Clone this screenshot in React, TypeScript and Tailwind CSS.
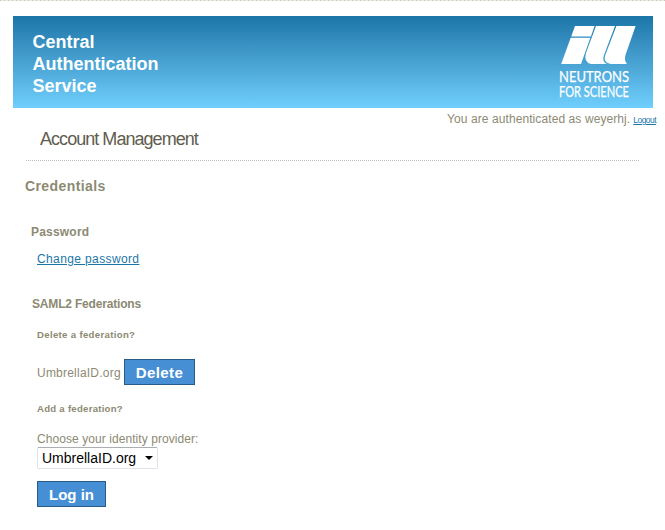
import type { ReactNode } from "react";

function IllLogo() {
  return (
    <svg width="80" height="82" viewBox="0 0 80 82" className="block overflow-visible" fill="#fff">
      <path d="M19 2H38.6L34.9 12.4H15.2Z" />
      <path d="M14.7 13.8H34.4L25 40H5.2Z" />
      <path d="M40 2H59L48 31Q45.6 37.5 51 40H35Q27.3 38 30 29Z" />
      <path d="M60.4 2H79.6L69.5 31Q67.8 36 71 40H54.5Q46.5 38 49.3 31Z" />
      <g fontFamily="Lato, sans-serif" fontSize="15" stroke="#fff" strokeWidth="0.25">
        <text x="3" y="58" textLength="70" lengthAdjust="spacingAndGlyphs">NEUTRONS</text>
        <text x="3" y="73" textLength="70" lengthAdjust="spacingAndGlyphs">FOR SCIENCE</text>
      </g>
    </svg>
  );
}

function ActionButton({ children, className }: { children: ReactNode; className: string }) {
  return (
    <button
      type="button"
      className={`box-border flex h-[26px] items-center justify-center border border-[#2a5a86] bg-[#468fd5] text-[15px] leading-none font-bold text-white ${className}`}
    >
      {children}
    </button>
  );
}

export default function App() {
  return (
    <div className="h-[530px] w-[665px] overflow-hidden bg-white font-['Liberation_Sans',Arial,sans-serif] text-xs text-[#8c8a73]">
      <div className="h-px bg-[repeating-linear-gradient(90deg,#c5c5b8_0_1px,#e9e9dd_1px_4px)]" />
      <header className="mt-[15px] ml-[13px] flex h-[92px] w-[640px] justify-between bg-linear-to-b from-[#1b76a8] to-[#70cffd] pt-[15px] pl-[19.5px]">
        <h1 className="w-32 text-lg leading-[22px] font-bold text-white">
          Central Authentication Service
        </h1>
        <div className="-mt-[7px] mr-[17px]">
          <IllLogo />
        </div>
      </header>
      <div className="flex h-[22px] items-baseline justify-end pt-[3px] pr-[9px] leading-4 whitespace-nowrap">
        <span className="tracking-[0.09px]">You are authenticated as weyerhj.</span>
        <a href="#" className="ml-[3px] text-[8.5px] tracking-[-0.55px] text-[#1b76a8] underline">Logout</a>
      </div>
      <main className="ml-[25px]">
        <h2 className="ml-px h-[31px] w-[613px] border-b border-dotted border-[#bdbdbd] pl-3.5 text-lg leading-[18px] tracking-[-0.96px] text-[#5f5d4e]">
          Account Management
        </h2>
        <h3 className="mt-[17px] h-4 text-sm leading-4 font-bold tracking-[0.4px]">Credentials</h3>
        <h4 className="mt-[30px] ml-1.5 h-4 leading-4 font-bold tracking-[0.2px]">Password</h4>
        <a href="#" className="mt-[11px] ml-3 block h-4 w-fit leading-4 tracking-[0.38px] text-[#1b76a8] underline">
          Change password
        </a>
        <h4 className="mt-[29px] ml-[7px] h-4 leading-4 font-bold tracking-[-0.18px]">SAML2 Federations</h4>
        <h5 className="mt-[15px] ml-3 h-4 text-[9.6px] leading-4 font-bold tracking-[0.33px]">Delete a federation?</h5>
        <div className="mt-4 ml-3 flex h-[26px] items-center">
          <span className="w-[87px] pt-0.5 tracking-[0.22px]">UmbrellaID.org</span>
          <ActionButton className="w-[71px] tracking-[0.4px]">Delete</ActionButton>
        </div>
        <h5 className="mt-4 ml-3 h-4 text-[9.6px] leading-4 font-bold tracking-[0.26px]">Add a federation?</h5>
        <label className="mt-3.5 ml-3 block h-4 leading-4 tracking-[0.07px]">Choose your identity provider:</label>
        <div className="ml-3 flex h-[22px] w-[121px] items-center justify-between rounded-[2px] border border-[#e2e3ea] border-t-[#abadb3] pr-1 pl-1 text-sm leading-4 text-black">
          <span>UmbrellaID.org</span>
          <svg width="8" height="4" viewBox="0 0 8 4"><path d="M0 0H8L4 4Z" /></svg>
        </div>
        <ActionButton className="mt-3 ml-3 w-[69px]">Log in</ActionButton>
      </main>
    </div>
  );
}
